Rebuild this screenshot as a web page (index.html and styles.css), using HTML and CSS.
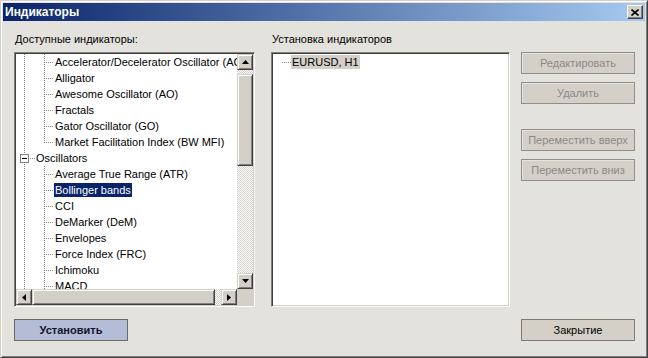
FILE: index.html
```html
<!DOCTYPE html>
<html lang="ru">
<head>
    <meta charset="UTF-8">
    <title>Индикаторы</title>
    <link rel="stylesheet" href="styles.css">
</head>
<body>
    <div class="window">
        <div class="titlebar">
            <span class="caption">Индикаторы</span>
            <button class="close-btn">
                <svg width="8" height="7" viewBox="0 0 8 7"><path d="M0.5 0.5 L7.5 6.5 M7.5 0.5 L0.5 6.5" stroke="#000" stroke-width="1.6"/></svg>
            </button>
        </div>

        <div class="content">
            <div class="panes">
                <div class="pane pane-available">
                    <div class="pane-label">Доступные индикаторы:</div>
                    <div class="tree-box sunken">
                        <div class="tree">
                            <div class="node leaf"><span class="branch"></span><span class="label">Accelerator/Decelerator Oscillator (AC)</span></div>
                            <div class="node leaf"><span class="branch"></span><span class="label">Alligator</span></div>
                            <div class="node leaf"><span class="branch"></span><span class="label">Awesome Oscillator (AO)</span></div>
                            <div class="node leaf"><span class="branch"></span><span class="label">Fractals</span></div>
                            <div class="node leaf"><span class="branch"></span><span class="label">Gator Oscillator (GO)</span></div>
                            <div class="node leaf last"><span class="branch"></span><span class="label">Market Facilitation Index (BW MFI)</span></div>
                            <div class="node group"><span class="toggle"></span><span class="stub"></span><span class="label">Oscillators</span></div>
                            <div class="node leaf"><span class="branch"></span><span class="label">Average True Range (ATR)</span></div>
                            <div class="node leaf"><span class="branch"></span><span class="label selected">Bollinger bands</span></div>
                            <div class="node leaf"><span class="branch"></span><span class="label">CCI</span></div>
                            <div class="node leaf"><span class="branch"></span><span class="label">DeMarker (DeM)</span></div>
                            <div class="node leaf"><span class="branch"></span><span class="label">Envelopes</span></div>
                            <div class="node leaf"><span class="branch"></span><span class="label">Force Index (FRC)</span></div>
                            <div class="node leaf"><span class="branch"></span><span class="label">Ichimoku</span></div>
                            <div class="node leaf"><span class="branch"></span><span class="label">MACD</span></div>
                        </div>
                        <div class="vscroll">
                            <div class="sb-btn"><svg width="7" height="4" viewBox="0 0 7 4"><path d="M3.5 0 L7 4 L0 4 Z"/></svg></div>
                            <div class="sb-gap"></div>
                            <div class="sb-thumb vthumb"></div>
                            <div class="sb-track"></div>
                            <div class="sb-btn"><svg width="7" height="4" viewBox="0 0 7 4"><path d="M0 0 L7 0 L3.5 4 Z"/></svg></div>
                        </div>
                        <div class="hscroll">
                            <div class="sb-btn"><svg width="4" height="7" viewBox="0 0 4 7"><path d="M0 3.5 L4 0 L4 7 Z"/></svg></div>
                            <div class="sb-thumb hthumb"></div>
                            <div class="sb-track"></div>
                            <div class="sb-btn"><svg width="4" height="7" viewBox="0 0 4 7"><path d="M0 0 L4 3.5 L0 7 Z"/></svg></div>
                        </div>
                        <div class="corner"></div>
                    </div>
                </div>

                <div class="pane pane-installed">
                    <div class="pane-label">Установка индикаторов</div>
                    <div class="list-box sunken">
                        <div class="node root"><span class="stub wide"></span><span class="label current">EURUSD, H1</span></div>
                    </div>
                </div>

                <div class="actions">
                    <button class="btn disabled">Редактировать</button>
                    <button class="btn disabled">Удалить</button>
                    <button class="btn disabled spaced">Переместить вверх</button>
                    <button class="btn disabled">Переместить вниз</button>
                </div>
            </div>

            <div class="footer">
                <button class="btn primary">Установить</button>
                <button class="btn">Закрытие</button>
            </div>
        </div>
    </div>
</body>
</html>
```

FILE: styles.css
```css
body {
  margin: 0;
  font-family: "Liberation Sans", Arial, sans-serif;
  font-size: 11px;
  color: #000;
}
.window {
  width: 648px;
  height: 358px;
  box-sizing: border-box;
  padding: 2px;
  background: #e4e2dc;
  border: 1px solid;
  border-color: #d4d0c8 #404040 #404040 #d4d0c8;
  box-shadow: inset 1px 1px #fff, inset -1px -1px #808080;
}
.titlebar {
  height: 18px;
  display: flex;
  align-items: center;
  justify-content: space-between;
  padding: 0 2px 0 2px;
  background: linear-gradient(to right, #0a246a, #a6caf0);
}
.caption {
  color: #fff;
  font-weight: bold;
  font-size: 12px;
}
.close-btn {
  width: 16px;
  height: 14px;
  padding: 0;
  display: flex;
  align-items: center;
  justify-content: center;
  background: #d4d0c8;
  border: 1px solid;
  border-color: #fff #404040 #404040 #fff;
  box-shadow: inset -1px -1px #808080;
}
.content {
  padding: 12px 10px 0 11px;
}
.panes {
  display: flex;
}
.pane-label {
  height: 13px;
  line-height: 13px;
  margin-bottom: 6px;
  padding-left: 1px;
}
.pane-available {
  width: 241px;
}
.pane-installed {
  width: 239px;
  margin-left: 16px;
}
.sunken {
  box-sizing: border-box;
  height: 255px;
  padding: 1px;
  background: #fff;
  border: 1px solid;
  border-color: #808080 #fff #fff #808080;
  box-shadow: inset 1px 1px #404040, inset -1px -1px #d4d0c8;
}
.tree-box {
  display: grid;
  grid-template-columns: 1fr 16px;
  grid-template-rows: 1fr 16px;
}
.tree {
  overflow: hidden;
  background: linear-gradient(#808080 1px, transparent 1px) 8px 0 / 1px 2px repeat-y;
}
.node {
  height: 16px;
  display: flex;
  align-items: center;
  white-space: nowrap;
}
.label {
  height: 14px;
  line-height: 14px;
  padding: 0 1px;
}
.label.selected {
  background: #0a246a;
  color: #fff;
}
.label.current {
  background: #d4d0c8;
}
.branch {
  align-self: flex-start;
  flex: none;
  width: 10px;
  height: 16px;
  margin-left: 28px;
  background:
    linear-gradient(#808080 1px, transparent 1px) 0 0 / 1px 2px repeat-y,
    linear-gradient(to right, #808080 1px, transparent 1px) 2px 8px / 2px 1px repeat-x;
}
.last .branch {
  height: 9px;
}
.toggle {
  flex: none;
  width: 9px;
  height: 9px;
  box-sizing: border-box;
  margin-left: 4px;
  border: 1px solid #808080;
  background: linear-gradient(#000, #000) center / 5px 1px no-repeat, #fff;
}
.stub {
  flex: none;
  width: 6px;
  height: 1px;
  background: linear-gradient(to right, #808080 1px, transparent 1px) 1px 0 / 2px 1px repeat-x;
}
.stub.wide {
  width: 10px;
  margin-left: 8px;
}
.vscroll {
  display: flex;
  flex-direction: column;
}
.hscroll {
  display: flex;
}
.corner {
  background: #d4d0c8;
}
.sb-btn,
.sb-thumb {
  box-sizing: border-box;
  background: #d4d0c8;
  border: 1px solid;
  border-color: #d4d0c8 #404040 #404040 #d4d0c8;
  box-shadow: inset 1px 1px #fff, inset -1px -1px #808080;
}
.sb-btn {
  flex: none;
  width: 16px;
  height: 16px;
  display: flex;
  align-items: center;
  justify-content: center;
}
.sb-gap {
  flex: none;
  height: 4px;
  background: repeating-conic-gradient(#d4d0c8 0 25%, #fff 0 50%) 0 0 / 2px 2px;
}
.sb-track {
  flex: 1;
  background: repeating-conic-gradient(#d4d0c8 0 25%, #fff 0 50%) 0 0 / 2px 2px;
}
.vthumb {
  flex: none;
  height: 92px;
}
.hthumb {
  flex: none;
  width: 183px;
}
.actions {
  width: 114px;
  margin-left: 11px;
  padding-top: 19px;
  display: flex;
  flex-direction: column;
  gap: 8px;
}
.btn {
  box-sizing: border-box;
  width: 114px;
  height: 22px;
  padding: 0;
  font-family: inherit;
  font-size: 11px;
  color: #000;
  background: #d4d0c8;
  border: 1px solid #7c7c7c;
}
.btn.disabled {
  color: #8a8a8a;
  border-color: #8e8e8e;
  box-shadow: inset 1px 1px #e6e4df;
}
.btn.spaced {
  margin-top: 17px;
}
.btn.primary {
  background: #b4bcd6;
  border-color: #6a6a6a;
  font-weight: bold;
  color: #14142a;
}
.footer {
  display: flex;
  justify-content: space-between;
  margin-top: 12px;
}
```
